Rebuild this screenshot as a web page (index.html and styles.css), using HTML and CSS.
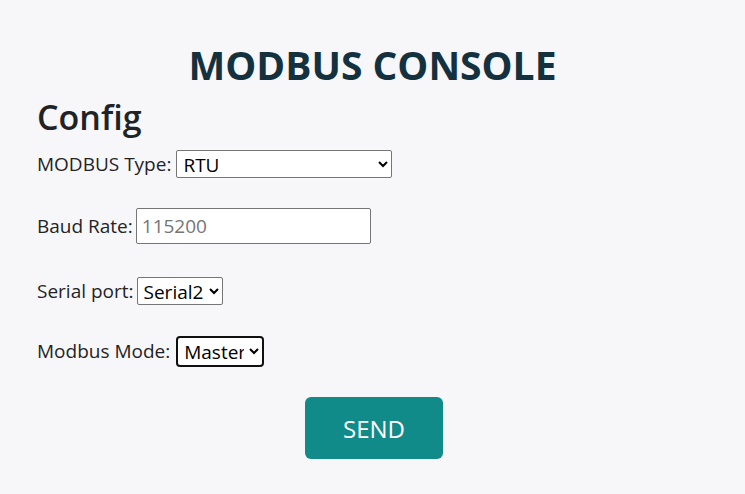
FILE: index.html
```html
<!DOCTYPE html>
<html>
<head>
<meta charset="utf-8">
<link rel="stylesheet" href="styles.css">
</head>
<body>
<main class="page">
  <h1 class="title">MODBUS CONSOLE</h1>
  <section class="config">
    <h2 class="heading">Config</h2>
    <div class="row row-type">
      <label class="label">MODBUS Type:</label>
      <select class="select select-type"><option>RTU</option></select>
    </div>
    <div class="row row-baud">
      <label class="label">Baud Rate:</label>
      <input class="input" type="text" placeholder="115200">
    </div>
    <div class="row row-serial">
      <label class="label">Serial port:</label>
      <select class="select select-serial"><option>Serial2</option></select>
    </div>
    <div class="row row-mode">
      <label class="label">Modbus Mode:</label>
      <select class="select select-mode focused"><option>Master</option></select>
    </div>
  </section>
  <div class="actions">
    <button class="send">SEND</button>
  </div>
</main>
</body>
</html>
```

FILE: styles.css
```css
html, body {
  margin: 0;
  padding: 0;
  background: #f7f7f9;
}
body {
  font-family: "Open Sans", "Noto Sans", sans-serif;
  color: #212529;
}
.page {
  padding: 40px 37px 0 37px;
  display: flex;
  flex-direction: column;
}
.title {
  margin: 0;
  text-align: center;
  font-size: 39px;
  font-weight: 700;
  color: #14313f;
  line-height: 50px;
}
.heading {
  margin: 7px 0 0 0;
  font-size: 34px;
  font-weight: 600;
  line-height: 40px;
  color: #1f2326;
}
.row {
  display: flex;
  align-items: center;
  gap: 5px;
  font-size: 19px;
}
.label {
  color: #1f2326;
}
.row-type { margin-top: 12px; height: 30px; }
.row-baud { margin-top: 29px; height: 36px; gap: 3px; }
.row-serial { margin-top: 32px; height: 30px; gap: 3px; }
.row-mode { margin-top: 29px; height: 32px; gap: 6px; }
.select {
  font-family: inherit;
  font-size: 19px;
  height: 28px;
  border: 1px solid #767676;
  border-radius: 2px;
  background: #fff;
  color: #000;
  padding: 0 2px;
}
.select-type { width: 216px; }
.select-serial { width: 86px; }
.select-mode {
  width: 88px;
  height: 31px;
  border: 2px solid #101010;
  border-radius: 4px;
}
.input {
  font-family: inherit;
  font-size: 19px;
  width: 235px;
  height: 36px;
  box-sizing: border-box;
  border: 1px solid #767676;
  border-radius: 2px;
  padding: 0 5px;
  background: #fff;
}
.input::placeholder { color: #757575; }
.actions {
  display: flex;
  justify-content: center;
  margin-top: 30px;
}
.send {
  width: 138px;
  height: 62px;
  background: #118a8a;
  color: #fff;
  border: none;
  border-radius: 6px;
  font-family: inherit;
  font-size: 24px;
  margin-left: 3px;
}
```
